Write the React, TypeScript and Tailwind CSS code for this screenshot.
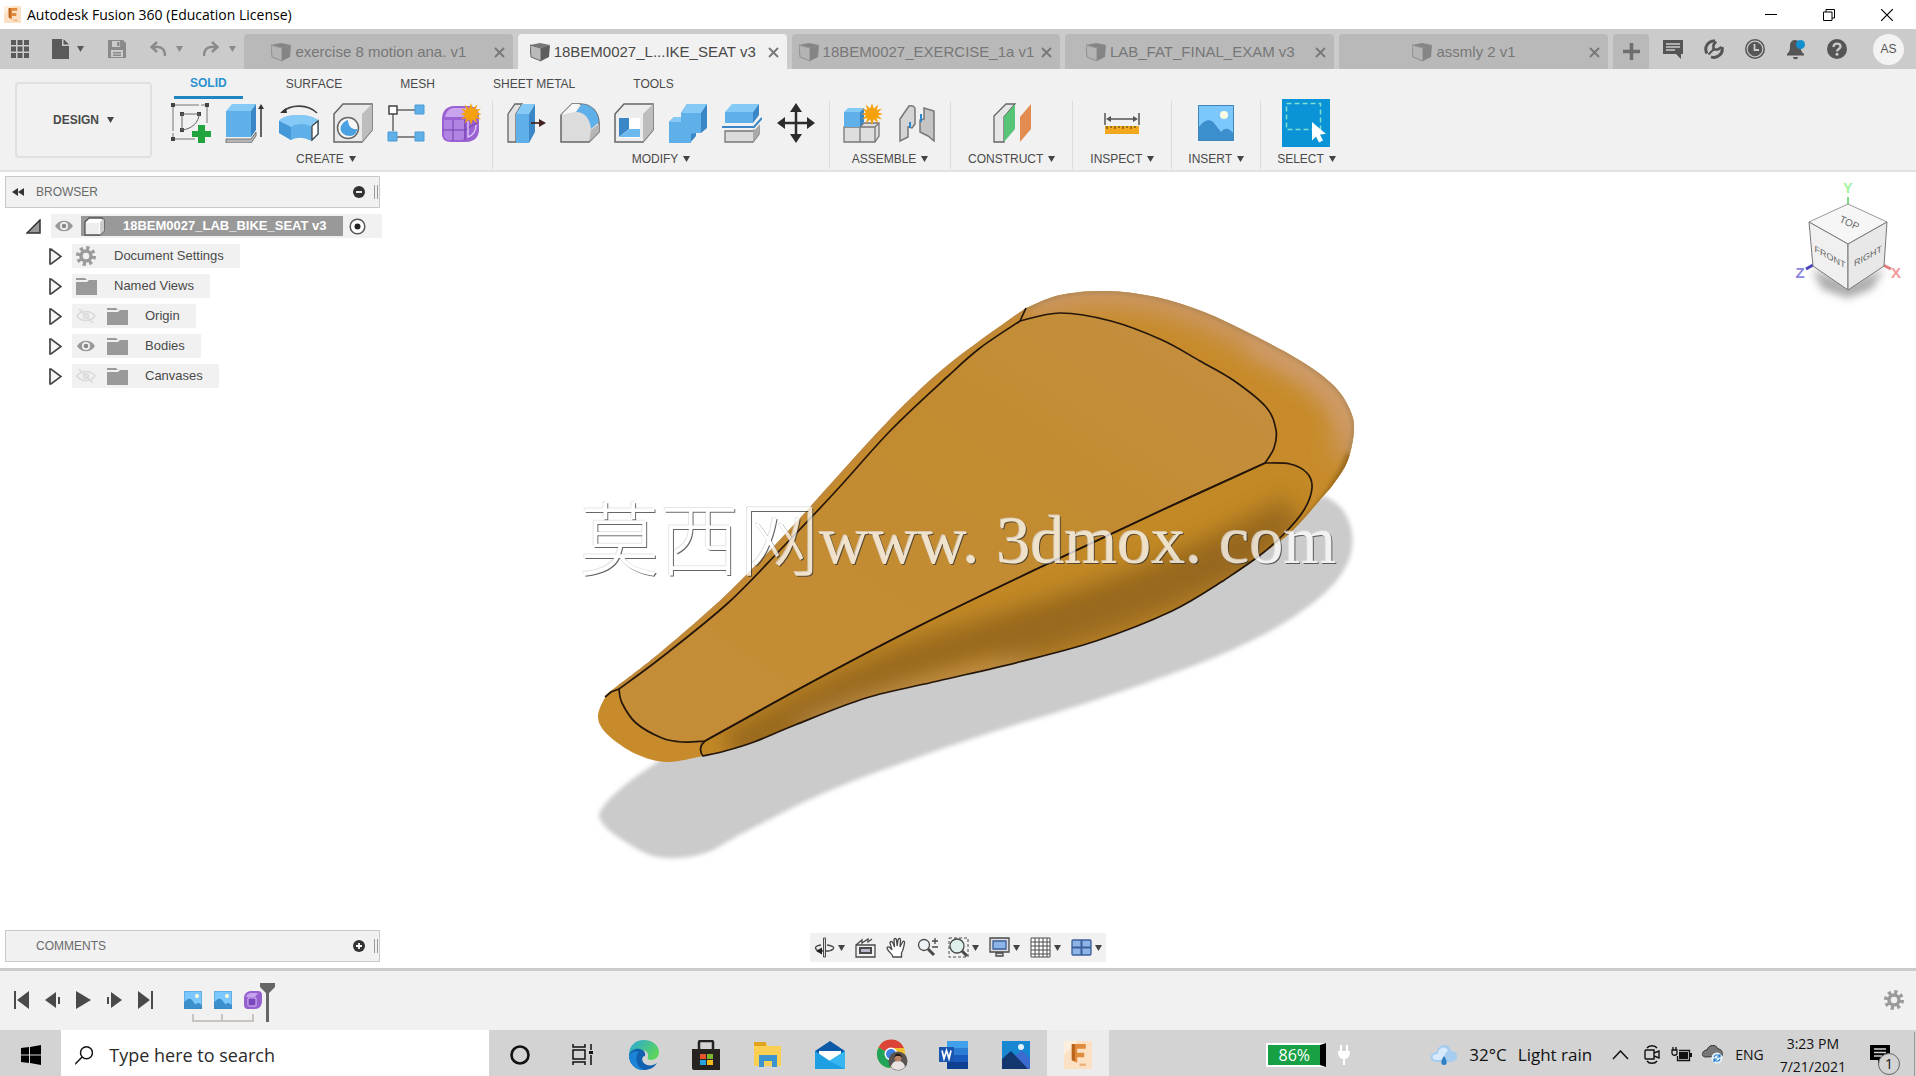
import type { ReactNode } from 'react'

const Caret = ({ className = 'text-[#444]' }: { className?: string }): JSX.Element => (
  <svg className={className} width="7" height="6" viewBox="0 0 7 6" fill="currentColor">
    <path d="M0 0h7L3.5 6z" />
  </svg>
)

const FusionLogo = ({ size }: { size: number }): JSX.Element => (
  <svg width={size} height={size} viewBox="0 0 18 18">
    <rect width="18" height="18" rx="1" fill="#fbe0c4" />
    <path d="M0 9L9 0H0z" fill="#fdeedd" />
    <path d="M5 2h9v3H8.500v2.500H13v3H8.500V14L5 12.500z" fill="#e08a3c" />
    <path d="M5 2h2v11l-2-1z" fill="#b8621b" />
    <path d="M10 14.500h4v1.500h-4z" fill="#f0ae72" />
  </svg>
)

const WindowButtons = (): JSX.Element => (
  <div className="flex">
    <button aria-label="Minimize" className="flex h-7 w-[58px] items-center justify-center">
      <svg width="12" height="12" viewBox="0 0 12 12" stroke="#000"><path d="M0 5.500h12" /></svg>
    </button>
    <button aria-label="Restore" className="flex h-7 w-[58px] items-center justify-center">
      <svg width="12" height="12" viewBox="0 0 12 12" fill="none" stroke="#000">
        <path d="M.5 3h8.500v8.500H.5zM3 3V.5h8.500V9H9" />
      </svg>
    </button>
    <button aria-label="Close" className="flex h-7 w-[58px] items-center justify-center">
      <svg width="12" height="12" viewBox="0 0 12 12" stroke="#000" strokeWidth="1.200"><path d="M0 0l12 12M12 0L0 12" /></svg>
    </button>
  </div>
)

/* tab strip */

const TabCube = ({ active }: { active: boolean }): JSX.Element => (
  <svg width="20" height="20" viewBox="0 0 20 20">
    <path d="M0 3l10-2 10 2-8 3z" fill={active ? '#777' : '#858585'} />
    <path d="M0 3l11 3v13L1 15z" fill={active ? '#b9b9b9' : '#b4b4b4'} stroke={active ? '#666' : '#909090'} />
    <path d="M11 6l9-3-1 12-8 4z" fill={active ? '#5d5d5d' : '#858585'} />
  </svg>
)

const tabs = [
  { title: 'exercise 8 motion ana. v1' },
  { title: '18BEM0027_L...IKE_SEAT v3', active: true },
  { title: '18BEM0027_EXERCISE_1a v1' },
  { title: 'LAB_FAT_FINAL_EXAM v3' },
  { title: 'assmly 2 v1' },
]

const DocTab = ({ title, active = false }: { title: string; active?: boolean }): JSX.Element => (
  <div
    className={
      active
        ? 'flex h-[35px] min-w-0 flex-1 items-center rounded-t bg-[#f1f1f1] pt-px pr-2 text-[#4a4a4a]'
        : 'flex h-[35px] min-w-0 flex-1 items-center rounded-t bg-[#b9b9b9] pt-px pr-2 text-[#777]'
    }
  >
    <button className="flex min-w-0 flex-1 items-center justify-center gap-1 text-[15px] whitespace-nowrap">
      <TabCube active={active} />
      <span className="truncate">{title}</span>
    </button>
    <button aria-label={`Close ${title}`}>
      <svg width="11" height="11" viewBox="0 0 11 11" stroke="#777" strokeWidth="1.800"><path d="M1 1l9 9M10 1l-9 9" /></svg>
    </button>
  </div>
)

const TabBar = (): JSX.Element => (
  <div className="flex h-10 items-end bg-[#cbcbcb]">
    <div className="flex h-10 w-[244px] shrink-0 items-center pl-[11px] text-[#5a5a5a]">
      <button aria-label="Data panel" className="mr-[23px]">
        <svg width="18" height="18" viewBox="0 0 18 18" fill="currentColor">
          <path d="M0 0h5v5H0zM6.500 0h5v5h-5zM13 0h5v5h-5zM0 6.500h5v5H0zM6.500 6.500h5v5h-5zM13 6.500h5v5h-5zM0 13h5v5H0zM6.500 13h5v5h-5zM13 13h5v5h-5z" />
        </svg>
      </button>
      <button aria-label="File" className="mr-6 flex items-center gap-2">
        <svg width="17" height="20" viewBox="0 0 17 20" fill="currentColor"><path d="M0 0h10v7h7v13H0zM11.500 0L17 5.500h-5.500z" /></svg>
        <Caret className="text-[#5a5a5a]" />
      </button>
      <button aria-label="Save" className="mr-6 text-[#8a8a8a]">
        <svg width="18" height="18" viewBox="0 0 18 18">
          <path d="M0 0h15l3 3v15H0z" fill="currentColor" />
          <path d="M4 1h8v6H4zM3 10h12v7H3z" fill="#cbcbcb" />
          <path d="M9 2h2.500v4H9zM5 12h8v1.500H5zM5 14.500h8V16H5z" fill="currentColor" />
        </svg>
      </button>
      <button aria-label="Undo" className="mr-5 flex items-center gap-2.5 text-[#8a8a8a]">
        <svg width="16" height="16" viewBox="0 0 16 16" fill="none" stroke="currentColor" strokeWidth="2.500">
          <path d="M7 1L1.500 6 7 11M2 6h6c4 0 7 3 7 9" />
        </svg>
        <Caret className="text-[#8a8a8a]" />
      </button>
      <button aria-label="Redo" className="flex items-center gap-2.5 text-[#8a8a8a]">
        <svg width="16" height="16" viewBox="0 0 16 16" fill="none" stroke="currentColor" strokeWidth="2.500">
          <path d="M9 1l5.500 5L9 11M14 6H8c-4 0-7 3-7 9" />
        </svg>
        <Caret className="text-[#8a8a8a]" />
      </button>
    </div>
    <div className="flex min-w-0 flex-1 gap-[5px]">
      {tabs.map((tab) => (
        <DocTab key={tab.title} {...tab} />
      ))}
    </div>
    <button aria-label="New design" className="ml-[5px] flex h-[35px] w-9 items-center justify-center rounded-t bg-[#b9b9b9]">
      <svg width="17" height="17" viewBox="0 0 17 17" stroke="#6e6e6e" strokeWidth="3.500"><path d="M8.500 0v17M0 8.500h17" /></svg>
    </button>
    <div className="flex h-10 items-center pr-3 pl-[14px] text-[#555]">
      <button aria-label="Comments" className="mr-[21px]">
        <svg width="20" height="20" viewBox="0 0 20 20">
          <path d="M0 1h20v14h-2v5l-5-5H0z" fill="currentColor" />
          <path d="M3 5h14M3 8h14M3 11h9" stroke="#cbcbcb" strokeWidth="1.500" />
        </svg>
      </button>
      <button aria-label="Extensions" className="mr-[21px]">
        <svg width="20" height="20" viewBox="0 0 20 20" fill="none" stroke="currentColor">
          <path d="M11 2A8.300 8.300 0 0 0 3 14.500M7 17.800A8.300 8.300 0 0 0 18 8" strokeWidth="3" />
          <path d="M4.500 15.500L10 10" strokeWidth="2" />
          <path d="M12 2.500L9.500 6v4.500H14L17.500 8" strokeWidth="2.600" />
        </svg>
      </button>
      <button aria-label="Job status" className="mr-[21px]">
        <svg width="20" height="20" viewBox="0 0 20 20" fill="none" stroke="currentColor">
          <circle cx="10" cy="10" r="9.200" strokeWidth="1.500" />
          <circle cx="10" cy="10" r="6.800" fill="currentColor" />
          <path d="M9.500 5v6H14" stroke="#cbcbcb" strokeWidth="1.800" />
        </svg>
      </button>
      <button aria-label="Notifications" className="mr-[21px]">
        <svg width="20" height="21" viewBox="0 0 20 21">
          <path d="M9 1c4 0 5.500 3 5.500 6.500S15.500 13 18 15v1.500H1V15c2.500-2 3-4 3-7.500S5 1 9 1zM7 18h5c0 3-5 3-5 0z" fill="currentColor" />
          <circle cx="14.500" cy="5.500" r="4.500" fill="#1390cf" />
        </svg>
      </button>
      <button aria-label="Help" className="mr-[26px]">
        <svg width="20" height="20" viewBox="0 0 20 20">
          <circle cx="10" cy="10" r="10" fill="currentColor" />
          <path d="M6.500 8c0-4.500 7-4.500 7-.5 0 2.500-3.500 2.500-3.500 5" fill="none" stroke="#cbcbcb" strokeWidth="2.300" />
          <circle cx="10" cy="15.300" r="1.500" fill="#cbcbcb" />
        </svg>
      </button>
      <button className="h-[31px] w-[31px] rounded-full bg-[#f3f3f3] text-xs">AS</button>
    </div>
  </div>
)

/* ribbon icons, all on a 40 x 40 grid */

const RibbonIcon = ({ children }: { children: ReactNode }): JSX.Element => (
  <svg width="40" height="40" viewBox="0 0 40 40" fill="none">{children}</svg>
)

const BLUE = '#5fb0e8'
const SIDE = '#3a86c6'

const Burst = ({ x, y }: { x: number; y: number }): JSX.Element => (
  <path
    transform={`translate(${x} ${y})`}
    fill="#f5a10c"
    d="M0-11l1.800 5.500 4.700-4-2 5.500 5.500-1.500-4 4 5 1.500-5 1.500 4 4-5.500-1.500 2 5.500-4.700-4L0 11l-1.800-5.500-4.700 4 2-5.500L-10 5.500l4-4-5-1.500 5-1.500-4-4 5.500 1.500-2-5.500 4.700 4z"
  />
)

const SketchIcon = (
  <RibbonIcon>
    <path d="M2 2h34M2 2v34M36 2v18M2 36h22" stroke="#777" strokeDasharray="26 2" />
    <path d="M0 0h4v4H0zM34 0h4v4h-4zM0 34h4v4H0zM9 9h4v4H9zM26 9h4v4h-4zM9 25h4v4H9z" fill="#444" />
    <path d="M11 11h17M11 11v16M28 11c0 8-7 15-17 16" stroke="#666" />
    <path d="M27 22h7v6h6v6h-6v7h-7v-7h-6v-6h6z" fill="#22a53f" />
  </RibbonIcon>
)

const ExtrudeIcon = (
  <RibbonIcon>
    <path d="M1 8l6-7h24l-5 7z" fill="#85caf7" />
    <path d="M1 8h25v26H1z" fill={BLUE} />
    <path d="M26 8l5-7v26l-5 7z" fill={SIDE} />
    <path d="M1 36h25l5-7v4l-5 7H1z" fill="#b5b5b5" stroke="#777" />
    <path d="M36 5v29" stroke="#333" strokeWidth="1.500" />
    <path d="M33 6h6l-3-5z" fill="#333" />
  </RibbonIcon>
)

const RevolveIcon = (
  <RibbonIcon>
    <path d="M0 18C6 10 32 10 40 18v13l-7 7-3-1c-6-3-12-3-18 0L0 30z" fill={BLUE} />
    <path d="M0 18C6 10 32 10 40 18l-7 6c-6-4-16-4-21 0z" fill="#85caf7" />
    <path d="M0 18l12 6v13L0 30z" fill="#4599d8" />
    <path d="M33 23l6-5v13l-6 6z" fill="#fff" stroke="#444" strokeWidth="1.300" />
    <path d="M3 9c9-8 26-8 35 1" stroke="#444" strokeWidth="1.600" />
    <path d="M1 10l6-5 1 5z" fill="#333" />
  </RibbonIcon>
)

const HoleIcon = (
  <RibbonIcon>
    <path d="M1 11L10 1h29v26l-10 12H1z" fill="#e9e9e9" stroke="#666" strokeWidth="1.500" />
    <path d="M29 11L39 1v26L29 39z" fill="#bdbdbd" />
    <circle cx="15" cy="25" r="10.500" fill="#f5f5f5" stroke="#666" strokeWidth="1.500" />
    <path d="M15 17c-11 4-9 16 2 16 5 0 7-4 7-7-6 1-9-4-9-9z" fill="#4aa0e0" />
  </RibbonIcon>
)

const PatternIcon = (
  <RibbonIcon>
    <path d="M10 7h18M6 10v18M10 34h18" stroke="#666" strokeWidth="1.500" />
    <path d="M2 3h8v8H2z" fill="#fff" stroke="#444" strokeWidth="1.500" />
    <path d="M28 2h9v9h-9zM1 29h9v9H1zM28 29h9v9h-9z" fill={BLUE} stroke="#4a9bd6" />
  </RibbonIcon>
)

const FormIcon = (
  <RibbonIcon>
    <path d="M1 16C1 8 6 3 13 3h14c7 0 11 4 11 10v14c0 7-5 12-13 12H10c-6 0-9-3-9-8z" fill="#9a62d2" />
    <path d="M4 14c1-5 4-9 9-9h12c2 0 2 3 0 6l-3 3z" fill="#c9a4ee" />
    <path d="M3 17h20v17c0 2-1 3-3 3H9c-4 0-6-2-6-6z" fill="#b184e4" />
    <path d="M12 17v21M2 27h22M24 17v20M24 27l13-8" stroke="#7040b0" />
    <path d="M27 18v16c6-2 8-6 8-12" stroke="#d8bff4" strokeWidth="1.500" />
    <Burst x={30} y={11} />
  </RibbonIcon>
)

const PressPullIcon = (
  <RibbonIcon>
    <path d="M2 11L9 1h7l-6 10v28H2z" fill="#e2e2e2" stroke="#666" strokeWidth="1.300" />
    <path d="M10 11l6-10h13l-6 10z" fill="#85caf7" />
    <path d="M10 11h13v29H10z" fill={BLUE} />
    <path d="M23 11l6-10v28l-6 11z" fill={SIDE} />
    <path d="M25 20h10" stroke="#422" strokeWidth="1.700" />
    <path d="M33 16l7 4-7 4z" fill="#422" />
  </RibbonIcon>
)

const FilletIcon = (
  <RibbonIcon>
    <path d="M1 12L12 1h8c12 0 19 9 19 20v8L29 39H1z" fill="#dcdcdc" stroke="#666" strokeWidth="1.500" />
    <path d="M1 12L12 1h8l-4 8h-2z" fill="#f7f7f7" />
    <path d="M16 9l6-8c11 1 16 9 17 18l-8 7C30 16 25 9 16 9z" fill={BLUE} />
    <path d="M29 39l10-10v-8l-8 6z" fill="#b5b5b5" />
  </RibbonIcon>
)

const ShellIcon = (
  <RibbonIcon>
    <path d="M1 11L10 1h29v26l-10 12H1z" fill="#ededed" stroke="#666" strokeWidth="1.500" />
    <path d="M29 11L39 1v26L29 39z" fill="#bdbdbd" />
    <path d="M5 15h21v20H5z" fill="#fff" />
    <path d="M5 15h10v11L5 34z" fill={SIDE} />
    <path d="M15 26h11v8H5z" fill="#6cb9ee" />
  </RibbonIcon>
)

const CombineIcon = (
  <RibbonIcon>
    <path d="M13 10l6-9h20v24l-6 5h-5v3l-6 7H1V19l5-5h7z" fill={SIDE} />
    <path d="M13 10h20v20h-5l-5 1v9H1V19h12z" fill={BLUE} />
    <path d="M13 10l6-9h20l-6 9zM1 19l5-5h7v5z" fill="#85caf7" />
  </RibbonIcon>
)

const SplitIcon = (
  <RibbonIcon>
    <path d="M3 9l7-8h27l-6 8z" fill="#85caf7" />
    <path d="M3 9h28v11H3z" fill={BLUE} />
    <path d="M31 9l6-8v11l-6 8z" fill={SIDE} />
    <path d="M3 28h28l6-8v11l-6 8H3z" fill="#dcdcdc" stroke="#777" strokeWidth="1.300" />
    <path d="M31 28l6-8v11l-6 8z" fill="#aaa" />
    <path d="M0 24h32l8-9" stroke="#f1f1f1" strokeWidth="5" />
    <path d="M0 24h32l8-9" stroke="#3a86c6" strokeWidth="2" />
  </RibbonIcon>
)

const MoveIcon = (
  <RibbonIcon>
    <path d="M20 6v28M6 20h28" stroke="#2c2c2c" strokeWidth="2.500" />
    <path d="M14 9h12l-6-9zM14 31h12l-6 9zM9 14v12l-8-6zM31 14v12l8-6z" fill="#2c2c2c" />
  </RibbonIcon>
)

const NewComponentIcon = (
  <RibbonIcon>
    <path d="M1 24h16v15H1zM17 24l4-4h15v13l-4 6H17z" fill="#dedede" stroke="#777" strokeWidth="1.300" />
    <path d="M1 9l4-4h17l-5 4z" fill="#85caf7" />
    <path d="M1 9h16v15H1z" fill={BLUE} />
    <path d="M17 9l4-4v14l-4 5z" fill={SIDE} />
    <path d="M32 24v15M17 24h15l4-4" stroke="#777" strokeWidth="1.300" />
    <Burst x={29} y={11} />
  </RibbonIcon>
)

const JointIcon = (
  <RibbonIcon>
    <path d="M3 16L12 3c4-1 6 1 6 3v15l-3 4-4-1v10l-8 4z" fill="#d4d4d4" stroke="#777" strokeWidth="1.500" />
    <path d="M37 8v30l-6-5-8-4V17l4-1V5z" fill="#c4c4c4" stroke="#777" strokeWidth="1.500" />
    <path d="M13 19v6M24 11v8" stroke="#2b8bd0" strokeWidth="2" />
  </RibbonIcon>
)

const PlaneIcon = (
  <RibbonIcon>
    <path d="M2 13L14 1h9L12 14v25H2z" fill="#e6e6e6" stroke="#666" strokeWidth="1.300" />
    <path d="M12 14L23 1v25L12 39z" fill="#57c478" />
    <path d="M28 14L39 1v25L28 39z" fill="#e28c52" />
  </RibbonIcon>
)

const MeasureIcon = (
  <RibbonIcon>
    <path d="M3 10v12M37 10v12M6 16h28" stroke="#555" strokeWidth="1.500" />
    <path d="M4 16l5-3v6zM36 16l-5-3v6z" fill="#555" />
    <path d="M3 23h34v8H3z" fill="#f2a81c" />
    <path d="M5 23v3M9 23v2M13 23v3M17 23v2M21 23v3M25 23v2M29 23v3M33 23v2" stroke="#664a10" strokeWidth="1.200" />
  </RibbonIcon>
)

const Landscape = ({ size }: { size: number }): JSX.Element => (
  <svg width={size} height={size} viewBox="0 0 36 36">
    <path d="M0 0h36v36H0z" fill="#7cc7fb" />
    <path d="M0 23c6-8 12-10 16-5l7 9c4-5 8-4 13 2v7H0z" fill="#3c8fcd" />
    <circle cx="26" cy="10" r="4" fill="#fdfbe0" />
    <path d="M.5.5h35v35H.5z" fill="none" stroke="#3f86bb" />
  </svg>
)

const SelectIcon = (
  <svg width="48" height="48" viewBox="0 0 48 48">
    <path d="M0 0h48v48H0z" fill="#0a93d6" />
    <path d="M4.500 4.500h34v26h-34z" fill="none" stroke="#7fe0d0" strokeWidth="1.500" strokeDasharray="5 3" />
    <path d="M30 23l14 12-6 .5 3 6-4 2-3-6-4 4z" fill="#fff" />
  </svg>
)

const groups = [
  { label: 'CREATE', className: 'pr-1 pl-2', icons: [SketchIcon, ExtrudeIcon, RevolveIcon, HoleIcon, PatternIcon, FormIcon] },
  { label: 'MODIFY', className: 'px-1.5', icons: [PressPullIcon, FilletIcon, ShellIcon, CombineIcon, SplitIcon, MoveIcon] },
  { label: 'ASSEMBLE', className: 'px-1.5', icons: [NewComponentIcon, JointIcon] },
  { label: 'CONSTRUCT', className: 'px-[17px]', icons: [PlaneIcon] },
  { label: 'INSPECT', className: 'px-[17px]', icons: [MeasureIcon] },
  { label: 'INSERT', className: 'px-4', icons: [<Landscape key="insert" size={36} />] },
  { label: 'SELECT', className: 'px-4', icons: [SelectIcon] },
]

const Ribbon = (): JSX.Element => (
  <div className="flex border-b-2 border-[#e2e2e2] bg-[#f1f1f1] pb-px text-xs text-[#4a4a4a]">
    <button className="mt-[13px] mr-1 ml-[15px] flex h-[76px] w-[137px] items-center justify-center gap-2 rounded border-2 border-[#e0e0e0] font-bold">
      DESIGN
      <Caret />
    </button>
    <div>
      <nav className="flex h-[30px] gap-7 pl-[18px]">
        <button className="border-b-[3px] border-[#1f86c0] px-4 font-bold text-[#2a92cf]">SOLID</button>
        <button className="px-[15px]">SURFACE</button>
        <button className="px-[15px]">MESH</button>
        <button className="px-[15px]">SHEET METAL</button>
        <button className="px-[15px]">TOOLS</button>
      </nav>
      <div className="flex divide-x divide-[#dcdcdc] pt-[2px]">
        {groups.map((group) => (
          <div key={group.label} className={group.className}>
            <div className="flex h-11 items-center justify-center">
              {group.icons.map((icon, i) => (
                <button key={i} aria-label={`${group.label} ${i + 1}`} className="flex w-[54px] justify-center">
                  {icon}
                </button>
              ))}
            </div>
            <button className="mx-auto mt-1 flex h-5 items-center gap-[5px]">
              {group.label}
              <Caret />
            </button>
          </div>
        ))}
      </div>
    </div>
  </div>
)

/* browser tree */

const Eye = (): JSX.Element => (
  <svg width="20" height="20" viewBox="0 0 20 20">
    <path d="M1 10c4-7 14-7 18 0-4 7-14 7-18 0z" fill="#999" />
    <circle cx="10" cy="10" r="4" fill="#f1f1f1" />
    <circle cx="10" cy="10" r="2.300" fill="#888" />
  </svg>
)

const EyeOff = (): JSX.Element => (
  <svg width="20" height="20" viewBox="0 0 20 20" fill="none" stroke="#dadada" strokeWidth="1.500">
    <path d="M1 10c4-6 14-6 18 0-4 6-14 6-18 0zM3 3l14 14" />
    <circle cx="10" cy="10" r="2.500" />
  </svg>
)

const Folder = (): JSX.Element => (
  <svg width="21" height="17" viewBox="0 0 21 17" fill="#9a9a9a">
    <path d="M0 0h9l2 2H0zM0 4h11l2-2h8v15H0z" />
  </svg>
)

const Gear = (): JSX.Element => (
  <svg width="20" height="20" viewBox="0 0 20 20" fill="none" stroke="#9a9a9a">
    <circle cx="10" cy="10" r="5" strokeWidth="3.500" />
    <circle cx="10" cy="10" r="8" strokeWidth="4" strokeDasharray="3.140 3.140" />
  </svg>
)

const rows = [
  { name: 'Document Settings', icon: <Gear /> },
  { name: 'Named Views', icon: <Folder /> },
  { name: 'Origin', icon: <Folder />, eye: <EyeOff /> },
  { name: 'Bodies', icon: <Folder />, eye: <Eye /> },
  { name: 'Canvases', icon: <Folder />, eye: <EyeOff /> },
]

const PanelBar = ({ title, open }: { title: string; open: boolean }): JSX.Element => (
  <div className="flex h-8 w-[375px] items-center border border-[#c9c9c9] bg-[#f1f1f1] pr-px text-xs text-[#6a6a6a]">
    <span className="w-[30px] pl-[6px]">
      {open && (
        <svg width="12" height="8" viewBox="0 0 12 8" fill="#333"><path d="M6 0v8L0 4zM12 0v8L6 4z" /></svg>
      )}
    </span>
    <span className="flex-1">{title}</span>
    <button aria-label={`Toggle ${title}`} className="mr-[9px]">
      <svg width="12" height="12" viewBox="0 0 12 12">
        <circle cx="6" cy="6" r="6" fill="#333" />
        <path d={open ? 'M3 6h6' : 'M3 6h6M6 3v6'} stroke="#fff" strokeWidth="1.800" />
      </svg>
    </button>
    <span className="h-[14px] w-1 border-x border-[#999]" />
  </div>
)

const Browser = (): JSX.Element => (
  <div className="text-[13px] text-[#4a4a4a]">
    <PanelBar title="BROWSER" open />
    <div className="mt-[6px] ml-[21px] flex h-6 items-center">
      <button aria-label="Collapse" className="mr-[10px]">
        <svg width="15" height="15" viewBox="0 0 15 15"><path d="M14 1v13H1z" fill="#999" stroke="#333" strokeWidth="1.500" /></svg>
      </button>
      <div className="flex h-6 items-center bg-[#f1f1f1] pr-4">
        <button aria-label="Visibility" className="mx-[3px] w-6"><Eye /></button>
        <span className="flex h-5 items-center bg-[#999] pr-4 pl-[3px] font-bold text-white">
          <svg className="mr-[18px]" width="21" height="19" viewBox="0 0 21 19">
            <path d="M1 5l4-4h13l2 2v11l-4 4H1z" fill="#fff" stroke="#555" strokeWidth="1.300" />
            <path d="M16 5l4-3v12l-4 4z" fill="#ccc" />
            <path d="M2 6h13v11H2z" fill="#eee" />
          </svg>
          18BEM0027_LAB_BIKE_SEAT v3
        </span>
        <input type="radio" name="active-component" aria-label="Activate component" defaultChecked className="peer sr-only" />
        <svg className="ml-[6px]" width="17" height="17" viewBox="0 0 17 17">
          <circle cx="8.500" cy="8.500" r="7.300" fill="#fff" stroke="#555" strokeWidth="1.500" />
          <circle cx="8.500" cy="8.500" r="3" fill="#222" />
        </svg>
      </div>
    </div>
    <ul className="mt-[6px] ml-[44px] flex flex-col gap-[6px]">
      {rows.map((row) => (
        <li key={row.name} className="flex h-6 items-center">
          <button aria-label={`Expand ${row.name}`} className="mr-[10px]">
            <svg width="13" height="17" viewBox="0 0 13 17"><path d="M1 1h1l10 7.500L2 16H1z" fill="#f6f6f6" stroke="#444" strokeWidth="1.700" /></svg>
          </button>
          <span className="flex h-6 items-center bg-[#f1f1f1] pr-4">
            {row.eye && <button aria-label={`Visibility ${row.name}`} className="mr-[7px] ml-1">{row.eye}</button>}
            <span className="mr-[17px] ml-1 w-[21px]">{row.icon}</span>
            {row.name}
          </span>
        </li>
      ))}
    </ul>
  </div>
)

/* model and view cube */

type Point = [number, number]

// Catmull-Rom spline through the points, written as cubic segments
const spline = (points: Point[]): string =>
  points
    .slice(1)
    .map((p, i) => {
      const a = points[i]
      const before = points[i - 1] ?? a
      const after = points[i + 2] ?? p
      return `C${a[0] + (p[0] - before[0]) / 6} ${a[1] + (p[1] - before[1]) / 6} ${p[0] - (after[0] - a[0]) / 6} ${p[1] - (after[1] - a[1]) / 6} ${p[0]} ${p[1]}`
    })
    .join('')

const rearRim: Point[] = [[1026, 308], [1060, 295], [1106, 291], [1156, 297], [1204, 312], [1253, 335], [1304, 363], [1335, 387], [1350, 410], [1354, 430], [1348, 460], [1335, 482], [1320, 500], [1290, 533], [1259, 556], [1223, 581]]
const lowerEdge: Point[] = [[1223, 581], [1172, 611], [1096, 641], [1019, 662], [938, 681], [866, 698], [795, 725], [754, 742], [725, 751], [703, 756]]
const nose: Point[] = [[703, 756], [667, 762], [636, 754], [608, 735], [598, 717], [606, 696], [616, 687]]
const leftRim: Point[] = [[616, 687], [662, 651], [728, 593], [789, 530], [835, 479], [891, 418], [937, 374], [978, 342], [1026, 308]]
const leftSeam: Point[] = [[1020, 321], [980, 348], [947, 377], [891, 430], [835, 492], [782, 548], [728, 603], [662, 657], [619, 689]]
const noseSeam: Point[] = [[619, 689], [622, 703], [636, 723], [662, 738], [682, 742], [705, 741]]
const rightSeam: Point[] = [[705, 741], [810, 683], [917, 627], [1045, 565], [1160, 511], [1265, 463]]
const rearSeam: Point[] = [[1265, 463], [1274, 448], [1276, 430], [1266, 407], [1233, 380], [1200, 361], [1162, 340], [1111, 321], [1060, 313], [1020, 321]]
const sideSeam: Point[] = [[1265, 463], [1290, 464], [1307, 473], [1312, 488], [1304, 510], [1284, 534], [1259, 556], [1223, 581]]

const OUTLINE = `M1026 308${spline(rearRim)}${spline(lowerEdge)}${spline(nose)}${spline(leftRim)}z`
const TOP_PANEL = `M1020 321${spline(leftSeam)}${spline(noseSeam)}${spline(rightSeam)}${spline(rearSeam)}z`
const SIDE_PANEL = `M1265 463${spline(sideSeam)}${spline(lowerEdge)}C699 751 700 745 705 741${spline(rightSeam)}z`
const SHADOW: Point[] = [[665, 757], [625, 785], [601, 810], [603, 824], [621, 839], [650, 855], [677, 858], [708, 852], [749, 830], [836, 788], [968, 740], [1096, 700], [1203, 662], [1274, 629], [1325, 593], [1348, 562], [1352, 533], [1342, 509], [1325, 496]]

const Model = (): JSX.Element => (
  <svg className="absolute inset-0 h-full w-full" viewBox="0 172 1916 796">
    <defs>
      <linearGradient id="top" x1="0" y1="1" x2="1" y2="0">
        <stop offset="0" stopColor="#c58d38" />
        <stop offset=".6" stopColor="#c28b30" />
        <stop offset="1" stopColor="#c68f42" />
      </linearGradient>
      <filter id="soft" x="-20%" y="-40%" width="140%" height="180%"><feGaussianBlur stdDeviation="11" /></filter>
      <filter id="shade" x="-10%" y="-10%" width="120%" height="120%"><feGaussianBlur stdDeviation="2" /></filter>
      <clipPath id="outline"><path d={OUTLINE} /></clipPath>
      <clipPath id="panel"><path d={SIDE_PANEL} /></clipPath>
    </defs>
    <path filter="url(#shade)" fill="#cbcbcb" d={`M665 757${spline(SHADOW)}L1100 600z`} />
    <path d={OUTLINE} fill="#c78b2b" />
    <g clipPath="url(#outline)" fill="none">
      <path d={`M1026 308${spline(rearRim.slice(0, 11))}`} stroke="#cb9660" strokeWidth="34" filter="url(#soft)" />
      <path d={`M1253 335${spline(rearRim.slice(5, 10))}`} stroke="#cf9b68" strokeWidth="30" filter="url(#soft)" />
      <path d={`M1026 308${spline(rearRim.slice(0, 11))}`} stroke="#a58254" strokeWidth="3" filter="url(#shade)" />
      <path d={`M616 687${spline(leftRim)}`} stroke="#b98646" strokeWidth="4" filter="url(#shade)" />
      <path d="M1352 455C1335 500 1300 530 1270 560" stroke="#9c6c1c" strokeWidth="12" filter="url(#shade)" />
    </g>
    <path d={TOP_PANEL} fill="url(#top)" />
    <path d={SIDE_PANEL} fill="#c38926" />
    <g clipPath="url(#panel)" fill="none">
      <path d="M730 750C800 715 850 684 930 656C1040 622 1170 590 1295 515" stroke="#93651f" strokeWidth="42" opacity=".85" filter="url(#soft)" />
      <path d="M1000 655C1090 632 1180 600 1260 545" stroke="#8f6322" strokeWidth="26" opacity=".6" filter="url(#soft)" />
      <path d="M1030 664C940 684 880 696 800 728" stroke="#bd9460" strokeWidth="12" filter="url(#soft)" />
    </g>
    <g fill="none" stroke="#24160a" strokeWidth="1.700">
      <path d={TOP_PANEL} />
      <path d={SIDE_PANEL} />
      <path d="M1020 321l6-13M619 689l-8 3-6 5" />
    </g>
  </svg>
)

const ViewCube = (): JSX.Element => (
  <svg className="absolute top-[9px] right-[4px]" width="120" height="125" viewBox="1792 180 120 125" fontFamily="Liberation Sans, Arial, sans-serif">
    <defs>
      <filter id="cube-shadow" x="-30%" y="-60%" width="160%" height="220%"><feGaussianBlur stdDeviation="4" /></filter>
    </defs>
    <path d="M1812 268l36 14 36-14-12 20-24 9-26-9z" fill="#aaa" filter="url(#cube-shadow)" />
    <path d="M1848 203v-7" stroke="#7edb7e" strokeWidth="2" />
    <path d="M1813 264l-7 4" stroke="#4b43c0" strokeWidth="3" />
    <path d="M1883 264l8 4" stroke="#e07c7c" strokeWidth="3" />
    <path d="M1848 203l39 18-39 22-39-22z" fill="#f6f6f6" stroke="#999" />
    <path d="M1809 221l39 22v46l-35-24z" fill="#f0f0f0" stroke="#777" />
    <path d="M1887 221l-39 22v46l36-24z" fill="#e8e8e8" stroke="#777" />
    <text x="1848" y="192" fontSize="14" fontWeight="700" textAnchor="middle" fill="#a0f5a0">Y</text>
    <text x="1800" y="277" fontSize="15" fontWeight="700" textAnchor="middle" fill="#8a85e0">Z</text>
    <text x="1896" y="277" fontSize="15" fontWeight="700" textAnchor="middle" fill="#f29a9a">X</text>
    <g fontSize="10" fill="#666" textAnchor="middle">
      <text transform="translate(1848 225) rotate(24)">TOP</text>
      <text transform="translate(1830 259) skewY(29)" fontSize="9">FRONT</text>
      <text transform="translate(1868 258) skewY(-29)" fontSize="9">RIGHT</text>
    </g>
  </svg>
)

const NavIcon = ({ children }: { children: ReactNode }): JSX.Element => (
  <svg width="21" height="21" viewBox="0 0 21 21" fill="none" stroke="#4a4a4a" strokeWidth="1.300">{children}</svg>
)

const navTools = [
  {
    name: 'Orbit',
    caret: true,
    icon: (
      <NavIcon>
        <path d="M7 8c-7 1-7 4-2 6h10c7-2 6-5-2-6" />
        <path d="M9.500 1h2v19h-2z" fill="#ddd" strokeWidth="1" />
        <path d="M8 10.500v7L2 14z" fill="#222" stroke="none" />
      </NavIcon>
    ),
  },
  {
    name: 'Look At',
    icon: <NavIcon><path d="M1 8h19v12H1zM1 8l6-5v3l6-4v3l4-3" /><path d="M5 11h11v5H5z" fill="#b9b9cc" strokeWidth="2" /></NavIcon>,
  },
  {
    name: 'Pan',
    icon: (
      <NavIcon>
        <path d="M7 20c0-3-5-5-6-9 1-2 3-1 5 2L4 6c0-2 2-2 3 0l1.500 4L8 3c0-2 2-2 2.500 0l.7 6 .8-6c.5-2 2.500-2 2.500 0L14 10l2.500-5c1-1.500 2.500-.5 2 1-1 5-1 7-3 10v4z" fill="#fff" />
      </NavIcon>
    ),
  },
  {
    name: 'Zoom',
    icon: <NavIcon><circle cx="7" cy="8" r="5.500" fill="#eef4f6" /><path d="M11 12l6 6" strokeWidth="3" /><path d="M15 4h6M18 1v6M15 10h6" /></NavIcon>,
  },
  {
    name: 'Zoom Window',
    caret: true,
    icon: <NavIcon><path d="M1 1h19v19H1z" strokeWidth="1" strokeDasharray="3 2" /><circle cx="9" cy="9" r="7" fill="#dff0ec" /><path d="M14 14l5 5" strokeWidth="3" /></NavIcon>,
  },
  {
    name: 'Display Settings',
    caret: true,
    icon: <NavIcon><path d="M1 1h19v14H1z" fill="#ddd" /><path d="M4 4h13v8H4z" fill="#8db4e6" stroke="#3b5f9a" /><path d="M7 16h7v3H7z" fill="#ddd" /></NavIcon>,
  },
  {
    name: 'Grid and Snaps',
    caret: true,
    icon: <NavIcon><path d="M1 1h19v19H1zM5 1v19M9 1v19M13 1v19M17 1v19M1 5h19M1 9h19M1 13h19M1 17h19" fill="#fff" strokeWidth="1" /></NavIcon>,
  },
  {
    name: 'Viewports',
    caret: true,
    icon: <NavIcon><rect x="1" y="3" width="19" height="15" rx="1" fill="#8db4e6" stroke="#3b5f9a" /><path d="M10.500 3v15M1 10.500h19" stroke="#3b5f9a" strokeWidth="2" /></NavIcon>,
  },
]

const NavBar = (): JSX.Element => (
  <div className="flex h-[29px] items-center gap-[10px] bg-[#f1f1f1] px-1">
    {navTools.map((tool) => (
      <button key={tool.name} aria-label={tool.name} className="flex items-center gap-[3px]">
        {tool.icon}
        {tool.caret && <Caret />}
      </button>
    ))}
  </div>
)

const Viewport = (): JSX.Element => (
  <main className="relative flex min-h-[600px] flex-1 flex-col justify-between bg-white px-[5px] pt-1 pb-[6px]">
    <Model />
    <div className="absolute inset-x-0 top-[312px] flex items-start justify-center whitespace-nowrap text-white opacity-75 [text-shadow:1px_1px_0_#333,-1px_-1px_0_#ddd]">
      <span className="font-['Noto_Sans_CJK_SC',sans-serif] text-[80px] leading-[100px] font-light">莫西网</span>
      <span className="font-['Liberation_Serif',serif] text-[68px] leading-[112px]">www. 3dmox. com</span>
    </div>
    <ViewCube />
    <div className="relative self-start">
      <Browser />
    </div>
    <div className="relative flex items-end">
      <PanelBar title="COMMENTS" open={false} />
      <div className="absolute inset-x-0 flex justify-center">
        <NavBar />
      </div>
    </div>
  </main>
)

/* timeline */

const transport = [
  { name: 'Go to start', d: 'M0 0h2v18H0zM15 0v18L3 9z' },
  { name: 'Step back', d: 'M11 1v16L0 9zM13 6h2v7h-2z' },
  { name: 'Play', d: 'M0 0l15 9L0 18z' },
  { name: 'Step forward', d: 'M4 1v16l11-8zM0 6h2v7H0z' },
  { name: 'Go to end', d: 'M0 0l12 9L0 18zM13 0h2v18h-2z' },
]

const Timeline = (): JSX.Element => (
  <div className="flex h-[62px] items-center border-t-[3px] border-[#cbcbcb] bg-[#f1f1f1] pr-3 pb-px pl-[14px]">
    <div className="flex gap-4">
      {transport.map((item) => (
        <button key={item.name} aria-label={item.name}>
          <svg width="15" height="18" viewBox="0 0 15 18" fill="#4a4a4a"><path d={item.d} /></svg>
        </button>
      ))}
    </div>
    <div className="relative ml-[31px] flex gap-3">
      <button aria-label="Canvas 1"><Landscape size={18} /></button>
      <button aria-label="Canvas 2"><Landscape size={18} /></button>
      <button aria-label="Form 1">
        <svg width="18" height="18" viewBox="0 0 18 18">
          <path d="M0 7c0-4 3-7 7-7h7c3 0 4 2 4 4v6c0 5-3 8-7 8H4c-3 0-4-2-4-4z" fill="#9560d0" />
          <path d="M2 6c1-3 3-4 5-4h7l-3 4z" fill="#c9a4ee" />
          <path d="M4 7h8v8H5c-1 0-1-1-1-2z" fill="#7a45bd" stroke="#d9bdf5" />
        </svg>
      </button>
      <svg className="absolute top-[-9px] left-[8px]" width="84" height="42" viewBox="0 0 84 42" fill="none">
        <path d="M1 32v7h60v-7M30 32v7" stroke="#c9c4bf" strokeWidth="2" />
        <path d="M68 1h15v4l-6 6v29h-3V11l-6-6z" fill="#666" />
      </svg>
    </div>
    <button aria-label="Timeline settings" className="ml-auto"><Gear /></button>
  </div>
)

/* taskbar */

const taskIcons = [
  {
    name: 'Cortana',
    icon: <svg width="22" height="22" viewBox="0 0 22 22"><circle cx="11" cy="11" r="8.500" fill="none" stroke="#111" strokeWidth="2.600" /></svg>,
  },
  {
    name: 'Task View',
    icon: (
      <svg width="21" height="21" viewBox="0 0 21 21" fill="none" stroke="#111" strokeWidth="1.500">
        <path d="M1 0v3h12V0M1 6h12v9H1zM1 21v-3h12v3M19 0v6M19 11v10" />
        <path d="M17 7h4v3h-4z" fill="#111" stroke="none" />
      </svg>
    ),
  },
  {
    name: 'Edge',
    icon: (
      <svg width="30" height="30" viewBox="0 0 30 30">
        <defs>
          <linearGradient id="edge-a" x1="0" y1="0" x2="1" y2=".6"><stop offset="0" stopColor="#2ba6dc" /><stop offset="1" stopColor="#5bd65a" /></linearGradient>
        </defs>
        <path d="M0 15C0 6 6 0 15 0s15 6 15 12c0 5-4 8-8 8-3 0-4-1-3-3 1-4-2-7-7-7-6 0-11 3-12 5z" fill="url(#edge-a)" />
        <path d="M0 15c1-4 6-7 11-6 4 1 6 4 5 7-4 0-4 7 2 9 4 1 7 0 10-2-3 5-8 7-13 7C6 30 0 23 0 15z" fill="#1260b0" />
        <path d="M10 12c-5 4-3 16 6 18-9 1-16-6-16-14 2-4 6-6 10-4z" fill="#1b84d6" />
      </svg>
    ),
  },
  {
    name: 'Microsoft Store',
    icon: (
      <svg width="30" height="30" viewBox="0 0 30 30">
        <path d="M8 9V2c0-1 1-1 2-1h10c1 0 2 0 2 1v7" fill="none" stroke="#222" strokeWidth="2.500" />
        <path d="M1 9h28v21H3c-1 0-2-1-2-2z" fill="#262321" />
        <path d="M9 14h6v5H9z" fill="#e8542a" />
        <path d="M16 14h6v5h-6z" fill="#7cb82f" />
        <path d="M9 20h6v5H9z" fill="#29a2e0" />
        <path d="M16 20h6v5h-6z" fill="#f7b91c" />
      </svg>
    ),
  },
  {
    name: 'File Explorer',
    icon: (
      <svg width="28" height="26" viewBox="0 0 28 26">
        <path d="M0 1h12l2 3h13v20H0z" fill="#fbd052" />
        <path d="M0 0h12v4H0z" fill="#e0a41e" />
        <path d="M5 13h18v12h-5v-6h-8v6H5z" fill="#3b94d0" />
      </svg>
    ),
  },
  {
    name: 'Mail',
    icon: (
      <svg width="30" height="28" viewBox="0 0 30 28">
        <path d="M0 10L15 0l15 10v4H0z" fill="#0d5ba8" />
        <path d="M4 10h22v10H4z" fill="#fff" />
        <path d="M0 10l15 10 15-10v18H0z" fill="#1f9fe3" />
        <path d="M30 28V10L14 20z" fill="#35b6f0" />
      </svg>
    ),
  },
  {
    name: 'Chrome',
    icon: (
      <svg width="32" height="32" viewBox="0 0 32 32">
        <circle cx="15" cy="15" r="14" fill="#f2c12e" />
        <path d="M15 15L2.500 8.500A14 14 0 0 1 28 9H15z" fill="#dc4437" />
        <path d="M15 15L2.500 8.500A14 14 0 0 0 14 29l5-9z" fill="#21a35a" />
        <circle cx="15" cy="15" r="6.500" fill="#fff" />
        <circle cx="15" cy="15" r="5" fill="#3f7fe0" />
        <circle cx="22" cy="22" r="9.500" fill="#5c5450" />
        <path d="M15 28c1-5 4-6 7-6s6 1 7 6c-4 4-10 4-14 0z" fill="#e9e4e2" />
        <circle cx="22" cy="19" r="3.500" fill="#b98468" />
        <path d="M18 19c0-6 8-6 8 0l-2-2h-4z" fill="#211c1a" />
      </svg>
    ),
  },
  {
    name: 'Word',
    icon: (
      <svg width="30" height="28" viewBox="0 0 30 28">
        <path d="M8 0h21v7H8z" fill="#41a0ea" />
        <path d="M8 7h21v7H8z" fill="#2b7cd3" />
        <path d="M8 14h21v7H8z" fill="#185abd" />
        <path d="M8 21h21v7H8z" fill="#103f91" />
        <path d="M0 6h15v15H0z" fill="#1a55b0" />
        <path d="M3 9.500l2 8 2.500-8 2.500 8 2-8" fill="none" stroke="#fff" strokeWidth="1.700" />
      </svg>
    ),
  },
  {
    name: 'Photos',
    icon: (
      <svg width="28" height="28" viewBox="0 0 28 28">
        <path d="M0 0h28v28H0z" fill="#1887d2" />
        <path d="M12 16l8-7 8 9v10H16z" fill="#3c6bd0" />
        <path d="M0 18l9-8 17 18H0z" fill="#12366e" />
        <circle cx="19" cy="6" r="3" fill="#dff2fd" />
      </svg>
    ),
  },
  { name: 'Fusion 360', active: true, icon: <FusionLogo size={28} /> },
]

const Tray = (): JSX.Element => (
  <div className="ml-auto flex items-center pt-[3px] whitespace-nowrap text-[#111]">
    <div className="mr-3 flex h-6 w-[60px] items-center justify-center border-2 border-r-[6px] border-white border-r-black bg-[#18a045] text-base text-white">86%</div>
    <svg className="mr-20" width="12" height="20" viewBox="0 0 12 20" fill="#fff">
      <path d="M2 0h2v6h4V0h2v6h2c0 5-2 8-5 8v6H5v-6c-3 0-5-3-5-8h2z" />
    </svg>
    <button className="flex items-center text-[17px]">
      <svg className="mr-3" width="27" height="22" viewBox="0 0 27 22">
        <path d="M7 18C-2 18-1 8 7 8 8-1 20-1 21 7c8 0 8 11 0 11z" fill="#a6cdf0" />
        <path d="M7 16C1 16 1 9 8 10c0-7 8-9 10-3-4 2-4 7-4 9z" fill="#d7eafb" />
        <path d="M14 12c3 4 4 9 0 9s-3-5 0-9z" fill="#2f7fc4" />
      </svg>
      <span className="mr-[11px]">32°C</span>
      <span>Light rain</span>
    </button>
    <svg className="ml-5" width="17" height="10" viewBox="0 0 17 10" fill="none" stroke="#111" strokeWidth="1.500"><path d="M1 9l7.500-8L16 9" /></svg>
    <svg className="ml-[15px]" width="17" height="19" viewBox="0 0 17 19" fill="none" stroke="#111" strokeWidth="1.400">
      <path d="M2 5h8v9H2c-1 0-1-1-1-1V6s0-1 1-1zM10 8l5-2v7l-5-2M3 3c2-3 8-3 10 0M3 16c2 3 8 3 10 0" />
    </svg>
    <svg className="ml-[10px]" width="21" height="16" viewBox="0 0 21 16">
      <path d="M8 5h9v7H8zM19 6h2v4h-2z" fill="#111" />
      <path d="M8 3.500h10.500v10H6.500V9M1 3h5v3c0 3-5 3-5 0zM2 0v3M5 0v3" fill="none" stroke="#111" strokeWidth="1.300" />
    </svg>
    <svg className="ml-[10px]" width="21" height="19" viewBox="0 0 21 19">
      <path d="M4 12C-2 12 0 5 5 5 7-1 14-1 16 4c4 0 5 4 4 7z" fill="#777" stroke="#333" />
      <circle cx="15" cy="13" r="5.500" fill="#e9f3fb" />
      <path d="M12 12c1-3 5-3 6 0M18 14c-1 3-5 3-6 0M18 9v3h-3M12 17v-3h3" fill="none" stroke="#1d78c8" strokeWidth="1.200" />
    </svg>
    <button className="ml-3 text-sm">ENG</button>
    <button className="ml-4 flex flex-col items-center text-sm leading-[23px]">
      <span>3:23 PM</span>
      <span>7/21/2021</span>
    </button>
    <button aria-label="Action center" className="relative ml-6 h-8 w-[30px]">
      <svg width="20" height="20" viewBox="0 0 20 20">
        <path d="M0 0h20v15h-8l-4 5v-5H0z" fill="#000" />
        <path d="M4 4h12M4 7.500h12M4 11h8" stroke="#d3d3d3" strokeWidth="1.500" />
      </svg>
      <span className="absolute right-0 -bottom-1 h-[22px] w-[22px] rounded-full border border-[#666] bg-[#d3d3d3] text-sm leading-5">1</span>
    </button>
    <span className="ml-[14px] h-[46px] w-[2px] border-l border-[#999]" />
  </div>
)

const Taskbar = (): JSX.Element => (
  <div className="flex h-[46px] items-stretch overflow-hidden bg-[#d3d3d3] font-['Open_Sans','Noto_Sans',sans-serif]">
    <button aria-label="Start" className="flex w-[61px] items-center justify-center pt-[3px]">
      <svg width="20" height="20" viewBox="0 0 20 20"><path d="M0 3l8-1v7.500H0zM9 2l11-2v9.500H9zM0 10.500h8V18l-8-1zM9 10.500h11V20L9 18z" /></svg>
    </button>
    <label className="flex w-[428px] items-center bg-white pt-[3px] pl-[14px]">
      <svg className="mr-4" width="20" height="20" viewBox="0 0 20 20" fill="none" stroke="#111" strokeWidth="1.600">
        <circle cx="12.500" cy="7.500" r="6.500" />
        <path d="M8 12l-8 8" />
      </svg>
      <input type="search" aria-label="Search" placeholder="Type here to search" className="w-full text-lg outline-none placeholder:text-[#2b2b2b]" />
    </label>
    <div className="flex">
      {taskIcons.map((item) => (
        <button
          key={item.name}
          aria-label={item.name}
          className={item.active ? 'flex w-[62px] items-center justify-center bg-[#ececec] pt-[3px]' : 'flex w-[62px] items-center justify-center pt-[3px]'}
        >
          {item.icon}
        </button>
      ))}
    </div>
    <Tray />
  </div>
)

const App = (): JSX.Element => {
  return (
    <div className="flex min-h-screen flex-col bg-white font-['Liberation_Sans',Arial,sans-serif]">
      <header className="flex h-[29px] items-center justify-between pl-1">
        <div className="flex items-center gap-[6px] font-['Open_Sans','Noto_Sans',sans-serif] text-sm text-black">
          <FusionLogo size={17} />
          Autodesk Fusion 360 (Education License)
        </div>
        <WindowButtons />
      </header>
      <TabBar />
      <Ribbon />
      <Viewport />
      <Timeline />
      <Taskbar />
    </div>
  )
}

export default App
